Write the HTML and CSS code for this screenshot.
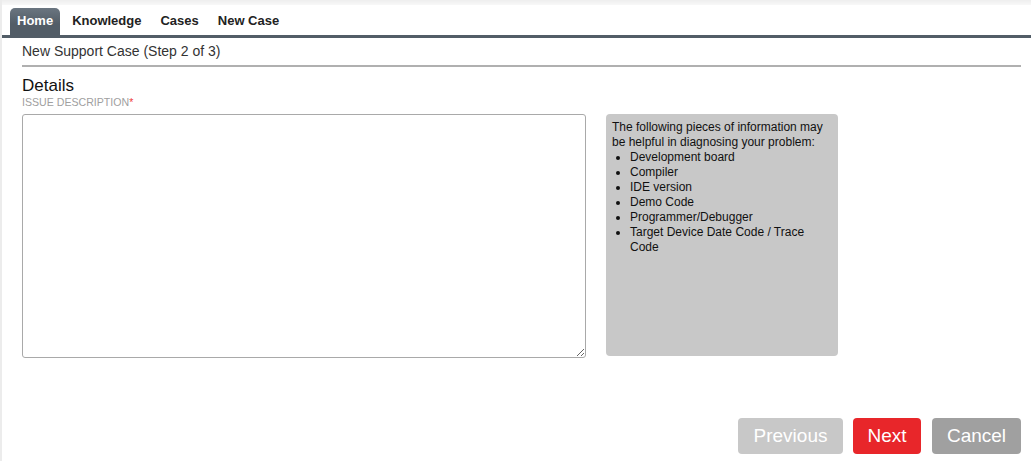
FILE: index.html
```html
<!DOCTYPE html>
<html>
<head>
<meta charset="utf-8">
<link rel="stylesheet" href="styles.css">
</head>
<body>
<div class="topstrip"></div>
<nav class="tabs">
  <a class="tab active">Home</a>
  <a class="tab">Knowledge</a>
  <a class="tab">Cases</a>
  <a class="tab">New Case</a>
</nav>
<main class="content">
  <div class="pagetitle">New Support Case (Step 2 of 3)</div>
  <h2 class="section">Details</h2>
  <div class="label">ISSUE DESCRIPTION<span class="req">*</span></div>
  <div class="row">
    <textarea class="desc"></textarea>
    <div class="help">
      <div>The following pieces of information may be helpful in diagnosing your problem:</div>
      <ul>
        <li>Development board</li>
        <li>Compiler</li>
        <li>IDE version</li>
        <li>Demo Code</li>
        <li>Programmer/Debugger</li>
        <li>Target Device Date Code / Trace Code</li>
      </ul>
    </div>
  </div>
  <div class="actions">
    <button class="btn prev">Previous</button>
    <button class="btn next">Next</button>
    <button class="btn cancel">Cancel</button>
  </div>
</main>
</body>
</html>
```
FILE: styles.css
```css
html, body {
  margin: 0;
  padding: 0;
  background: #fff;
}
body {
  width: 1029px;
  height: 461px;
  border-left: 2px solid #ececec;
  font-family: "Liberation Sans", Arial, sans-serif;
  color: #222;
  overflow: hidden;
}
.topstrip {
  height: 5px;
  background: linear-gradient(#eeeeee, #f8f8f8);
}
.tabs {
  display: flex;
  align-items: flex-end;
  height: 30px;
  padding-left: 8px;
  border-bottom: 3px solid #525d67;
}
.tab {
  display: block;
  padding: 0 7px;
  margin-right: 5px;
  height: 27px;
  line-height: 26px;
  font-size: 13px;
  font-weight: bold;
  color: #222;
  border-radius: 5px 5px 0 0;
}
.tab.active {
  background: linear-gradient(#6a7580, #525d67 60%);
  color: #fff;
}
.content {
  padding: 0 10px 0 20px;
}
.pagetitle {
  font-size: 14px;
  color: #333;
  padding: 5px 0 6px;
  line-height: 16px;
  border-bottom: 2px solid #b0b0b0;
}
.section {
  margin: 9px 0 0;
  font-size: 17px;
  font-weight: normal;
  line-height: 20px;
  color: #111;
}
.label {
  font-size: 10.6px;
  line-height: 13px;
  margin-top: 0;
  color: #a0a0a0;
}
.req {
  color: #f03a3a;
}
.row {
  display: flex;
  gap: 20px;
  margin-top: 5px;
}
.desc {
  width: 564px;
  height: 244px;
  box-sizing: border-box;
  border: 1px solid #a9a9a9;
  border-radius: 3px;
  margin: 0;
  resize: both;
}
.help {
  width: 232px;
  height: 242px;
  box-sizing: border-box;
  background: #c8c8c8;
  border-radius: 4px;
  padding: 6px 6px;
  font-size: 12px;
  line-height: 15px;
  color: #111;
}
.help ul {
  margin: 0;
  padding-left: 18px;
}
.actions {
  display: flex;
  justify-content: flex-end;
  gap: 10px;
  margin-top: 60px;
}
.btn {
  height: 36px;
  border: none;
  border-radius: 4px;
  color: #fff;
  font-family: "Liberation Sans", Arial, sans-serif;
  font-size: 19px;
  padding: 0 8px;
}
.btn.prev { background: #c8c8c8; width: 105px; }
.btn.next { background: #e8262a; width: 68px; }
.btn.cancel { background: #a0a0a0; width: 89px; margin-left: 1px; }
```
